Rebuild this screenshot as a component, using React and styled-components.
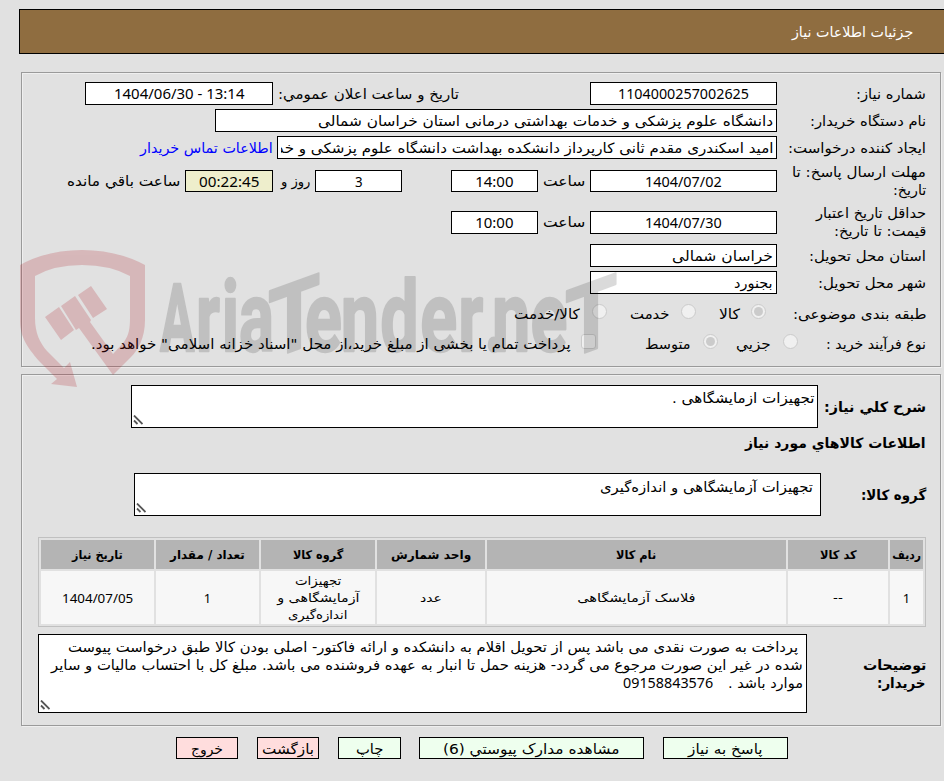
import React, { useLayoutEffect, useRef, useState } from "react";
import styled, { createGlobalStyle, css } from "styled-components";

const GlobalStyle = createGlobalStyle`
  * { box-sizing: border-box; }
  html, body { margin: 0; overflow: hidden; background: #e1e1e1; }
  body {
    font-family: "DejaVu Sans Condensed", "DejaVu Sans", sans-serif;
    font-size: 14px;
    line-height: 18px;
    color: #000;
  }
`;

/* ---------- text sized to a given measure ---------- */
const FitBox = styled.span`
  display: block;
  flex: none;
  width: ${(p) => p.$w}px;
  direction: rtl;
  text-align: right;
  ${(p) => p.$num && css`
    margin-top: -1px;
    font-family: "Noto Sans", "DejaVu Sans Condensed", sans-serif;
    font-size: 1.07em;
  `}
`;
const FitInner = styled.span`
  display: inline-block;
  white-space: pre;
  transform-origin: 100% 50%;
`;
const FitWrap = styled.span`
  display: flex;
  justify-content: flex-start;
  width: 100%;
`;

function Fit({ w, num, children }) {
  const ref = useRef(null);
  const [k, setK] = useState(1);
  useLayoutEffect(() => {
    const natural = ref.current.offsetWidth;
    if (natural) setK(w / natural);
  }, [w, children]);
  return (
    <FitBox $w={w} $num={num}>
      <FitWrap>
        <FitInner ref={ref} style={{ transform: `scaleX(${k})` }}>{children}</FitInner>
      </FitWrap>
    </FitBox>
  );
}

/* ---------- page ---------- */
const Page = styled.div`
  position: relative;
  direction: rtl;
  width: 944px;
  height: 781px;
  padding-top: 9px;
  overflow: hidden;
`;
const TitleBar = styled.header`
  display: flex;
  align-items: center;
  height: 45px;
  margin-left: 19px;
  padding-right: 31px;
  border: 1px solid #000;
  border-right: 0;
  background: #8f6d40;
  color: #fff;
`;
const Panel = styled.section`
  width: 920px;
  height: ${(p) => p.$h}px;
  margin: ${(p) => p.$mt}px 3px 0 21px;
  padding-right: 14px;
  border: 1px solid #9a9a9a;
  box-shadow: inset 1px 1px 0 #efefef, 1px 1px 0 #efefef;
`;
const Row = styled.div`
  display: flex;
  align-items: center;
  height: ${(p) => p.$h}px;
  margin-top: ${(p) => p.$mt || 0}px;
`;
const Label = styled.div`
  flex: none;
  width: ${(p) => p.$w ?? 149}px;
  ${(p) => p.$bold && css`font-weight: bold;`}
`;
const Space = styled.span`
  flex: none;
  width: ${(p) => p.$w}px;
`;
const Field = styled.div`
  display: flex;
  flex: none;
  align-items: center;
  justify-content: ${(p) => (p.$center ? "center" : "flex-start")};
  width: ${(p) => p.$w}px;
  height: ${(p) => p.$h ?? 23}px;
  padding: 0 3px;
  border: 1px solid #000;
  background: ${(p) => p.$bg || "#fff"};
`;
const Clip = styled.div`
  display: flex;
  width: 100%;
  overflow: hidden;
`;
const Link = styled.a`
  color: #0000ff;
`;
const Radio = styled.span`
  display: grid;
  place-items: center;
  flex: none;
  width: 15px;
  height: 15px;
  margin-bottom: 5px;
  border: 1px solid #cbcbcb;
  border-radius: ${(p) => (p.$square ? "3px" : "50%")};
  background: #f0f0f0;
  &::after {
    content: "";
    width: 9px;
    height: 9px;
    border-radius: 50%;
    background: ${(p) => (p.$on ? "#cbcbcb" : "transparent")};
  }
`;
const Heading = styled.h2`
  display: flex;
  margin: 6px 0 0;
  height: 18px;
  font-size: 14px;
  font-weight: bold;
`;
const Area = styled.div`
  position: relative;
  flex: none;
  width: ${(p) => p.$w}px;
  height: ${(p) => p.$h}px;
  padding: ${(p) => p.$pad || "3px 3px"};
  border: 1px solid #000;
  background: #fff;
`;
const Grip = styled.svg`
  position: absolute;
  left: 1px;
  bottom: 2px;
  width: 10px;
  height: 10px;
`;
const Indent = styled.div`
  padding-right: ${(p) => p.$w}px;
`;
const Line = styled.div`
  display: flex;
  height: 18px;
`;

/* ---------- goods table ---------- */
const Table = styled.table`
  width: 888px;
  margin-top: 21px;
  border: 1px solid #c0c0c0;
  border-collapse: separate;
  border-spacing: 2px;
  table-layout: fixed;
  font-size: 12px;
  line-height: 17px;
`;
const Th = styled.th`
  width: ${(p) => p.$w}px;
  height: 29px;
  padding: 1px 0 0;
  background: #b4b4b4;
`;
const Td = styled.td`
  height: 53px;
  padding: 2px 0 0;
  background: #f7f7f7;
`;
const Stack = styled.div`
  display: flex;
  flex-direction: column;
  align-items: center;
`;

const Actions = styled.footer`
  display: flex;
  gap: 19px;
  margin-top: 11px;
  padding-right: 156px;
`;
const Button = styled.button`
  display: flex;
  flex: none;
  align-items: center;
  justify-content: center;
  width: ${(p) => p.$w}px;
  height: 22px;
  margin: 0 ${(p) => p.$pull || 0}px 0 0;
  padding: 1px 0 0;
  border: 1px solid #000;
  background: ${(p) => (p.$warn ? "#ffdddd" : "#eeffee")};
  color: #000;
  font: inherit;
`;

/* ---------- watermark ---------- */
const Mark = styled.svg`
  position: absolute;
  left: 0;
  top: 240px;
  width: 640px;
  height: 155px;
  pointer-events: none;
  direction: ltr;
`;
const MarkText = styled.text`
  font-family: Roboto, sans-serif;
  font-weight: 700;
  font-size: ${(p) => p.$size || 99}px;
  vector-effect: non-scaling-stroke;
`;

const Watermark = () => (
  <Mark viewBox="0 240 640 155">
    <g fill="#af141e" opacity=".2">
      <path d="M20 265Q47 250 82 250T145 265V320C145 338 138 350 131 357L113 375 79 328 76 330 61 306 75 296 91 320 90 322 113 354 124 342C129 335 130 328 130 318V276Q110 265 82 265T35 276V318C35 333 40 343 47 351L64 368 70 362 77 387 51 384 57 379 40 362C25 345 20 335 20 320Z" />
      <path d="M45 317L59 307 74 330 61 340ZM78 295L91 286 107 309 93 318Z" />
    </g>
    <g fill="#000" opacity=".14" stroke="#000" strokeWidth="2" strokeLinejoin="round">
      <MarkText $size={95} transform="translate(160 351) scale(.54 1)">A</MarkText>
      <MarkText transform="translate(0 351) scale(.66 1)" x="297 336 362">ria</MarkText>
      <MarkText $size={96} transform="translate(268 360) skewY(-20) scale(.88 1)">T</MarkText>
      <MarkText transform="translate(0 351) scale(.69 1)" x="442 494 551 609 664 702 713 769">ender.ne</MarkText>
      <MarkText $size={96} transform="translate(565 360) skewY(-20) scale(.88 1)">T</MarkText>
    </g>
  </Mark>
);

const ResizeGrip = () => (
  <Grip viewBox="0 0 10 10">
    <path d="M1 0.5L9.5 9M1 5.5L4.500 9" stroke="#555" strokeWidth="1.8" fill="none" />
  </Grip>
);

const columns = [
  ["ردیف", 33, 29],
  ["کد کالا", 100, 37],
  ["نام کالا", 299, 40],
  ["واحد شمارش", 108, 80],
  ["گروه کالا", 114, 50],
  ["تعداد / مقدار", 103, 75],
  ["تاریخ نیاز", 113, 51],
];

const cells = [
  [["1", 7, true]],
  [["--", 10]],
  [["فلاسک آزمایشگاهی", 119]],
  [["عدد", 22]],
  [["تجهیزات", 46], ["آزمایشگاهی و", 83], ["اندازه‌گیری", 59]],
  [["1", 7, true]],
  [["1404/07/05", 71, true]],
];

export default function App() {
  return (
    <>
      <GlobalStyle />
      <Page>
        <TitleBar>
          <Fit w={121}>جزئیات اطلاعات نیاز</Fit>
        </TitleBar>

        <Panel $mt={18} $h={295}>
          <Row $mt={9} $h={23}>
            <Label><Fit w={70}>شماره نیاز:</Fit></Label>
            <Field $w={187} $center><Fit num w={131}>1104000257002625</Fit></Field>
            <Space $w={131} />
            <Fit w={181}>تاریخ و ساعت اعلان عمومي:</Fit>
            <Space $w={5} />
            <Field $w={188} $center><Fit num w={131}>{"\u200e1404/06/30 - 13:14"}</Fit></Field>
          </Row>
          <Row $mt={4} $h={23}>
            <Label><Fit w={116}>نام دستگاه خریدار:</Fit></Label>
            <Field $w={562}><Fit w={455}>دانشگاه علوم پزشکی و خدمات بهداشتی درمانی استان خراسان شمالی</Fit></Field>
          </Row>
          <Row $mt={4} $h={23}>
            <Label><Fit w={138}>ایجاد کننده درخواست:</Fit></Label>
            <Field $w={500}>
              <Clip><Fit w={523}>امید اسکندری مقدم ثانی کارپرداز دانشکده بهداشت دانشگاه علوم پزشکی و خدمات</Fit></Clip>
            </Field>
            <Space $w={4} />
            <Link><Fit w={133}>اطلاعات تماس خریدار</Fit></Link>
          </Row>
          <Row $mt={5} $h={34}>
            <Label>
              <Fit w={134}>مهلت ارسال پاسخ: تا</Fit>
              <Fit w={33}>تاریخ:</Fit>
            </Label>
            <Field $w={187} $h={22} $center><Fit num w={77}>1404/07/02</Fit></Field>
            <Space $w={5} />
            <Fit w={42}>ساعت</Fit>
            <Space $w={5} />
            <Field $w={87} $h={22} $center><Fit num w={38}>14:00</Fit></Field>
            <Space $w={49} />
            <Field $w={87} $h={22} $center><Fit num w={8}>3</Fit></Field>
            <Space $w={5} />
            <Fit w={29}>روز و</Fit>
            <Space $w={8} />
            <Field $w={88} $h={22} $center $bg="#eeeecc"><Fit num w={60}>00:22:45</Fit></Field>
            <Space $w={5} />
            <Fit w={113}>ساعت باقي مانده</Fit>
          </Row>
          <Row $mt={6} $h={36}>
            <Label>
              <Fit w={110}>حداقل تاریخ اعتبار</Fit>
              <Fit w={92}>قیمت: تا تاریخ:</Fit>
            </Label>
            <Field $w={187} $center><Fit num w={77}>1404/07/30</Fit></Field>
            <Space $w={5} />
            <Fit w={42}>ساعت</Fit>
            <Space $w={5} />
            <Field $w={87} $center><Fit num w={38}>10:00</Fit></Field>
          </Row>
          <Row $mt={4} $h={23}>
            <Label><Fit w={117}>استان محل تحویل:</Fit></Label>
            <Field $w={187}><Fit w={101}>خراسان شمالی</Fit></Field>
          </Row>
          <Row $mt={4} $h={23}>
            <Label><Fit w={108}>شهر محل تحویل:</Fit></Label>
            <Field $w={187}><Fit w={39}>بجنورد</Fit></Field>
          </Row>
          <Row $mt={10} $h={20}>
            <Label $w={160}><Fit w={133}>طبقه بندی موضوعی:</Fit></Label>
            <Radio $on />
            <Space $w={11} />
            <Fit w={21}>کالا</Fit>
            <Space $w={23} />
            <Radio />
            <Space $w={11} />
            <Fit w={40}>خدمت</Fit>
            <Space $w={23} />
            <Radio />
            <Space $w={12} />
            <Fit w={66}>کالا/خدمت</Fit>
          </Row>
          <Row $mt={10} $h={20}>
            <Label $w={128}><Fit w={100}>نوع فرآیند خرید :</Fit></Label>
            <Radio />
            <Space $w={12} />
            <Fit w={35}>جزيي</Fit>
            <Space $w={18} />
            <Radio $on />
            <Space $w={12} />
            <Fit w={46}>متوسط</Fit>
            <Space $w={49} />
            <Radio $square />
            <Space $w={10} />
            <Fit w={480}>پرداخت تمام یا بخشی از مبلغ خرید،از محل "اسناد خزانه اسلامی" خواهد بود.</Fit>
          </Row>
        </Panel>

        <Panel $mt={7} $h={352}>
          <Row $mt={10} $h={43}>
            <Label $w={108} $bold><Fit w={102}>شرح كلي نیاز:</Fit></Label>
            <Area $w={687} $h={43}>
              <Fit w={142}>تجهیزات ازمایشگاهی .</Fit>
              <ResizeGrip />
            </Area>
          </Row>
          <Heading><Fit w={181}>اطلاعات کالاهاي مورد نیاز</Fit></Heading>
          <Row $mt={21} $h={43}>
            <Label $w={105} $bold><Fit w={65}>گروه کالا:</Fit></Label>
            <Area $w={687} $h={43} $pad="4px 7px">
              <Fit w={213}>تجهیزات آزمایشگاهی و اندازه‌گیری</Fit>
              <ResizeGrip />
            </Area>
          </Row>
          <Table>
            <thead>
              <tr>
                {columns.map(([name, width, textWidth]) => (
                  <Th key={name} $w={width}><Stack><Fit w={textWidth}>{name}</Fit></Stack></Th>
                ))}
              </tr>
            </thead>
            <tbody>
              <tr>
                {cells.map((lines, i) => (
                  <Td key={i}>
                    <Stack>
                      {lines.map(([text, width, num]) => <Fit key={text} w={width} num={num}>{text}</Fit>)}
                    </Stack>
                  </Td>
                ))}
              </tr>
            </tbody>
          </Table>
          <Row $mt={7} $h={79}>
            <Label $w={119} $bold>
              <Fit w={63}>توضیحات</Fit>
              <Fit w={49}>خریدار:</Fit>
            </Label>
            <Area $w={769} $h={79}>
              <Indent $w={5}>
                <Fit w={730}>پرداخت به صورت نقدی می باشد پس از تحویل اقلام به دانشکده و ارائه فاکتور- اصلی بودن کالا طبق درخواست پیوست</Fit>
              </Indent>
              <Fit w={752}>شده در غیر این صورت مرجوع می گردد- هزینه حمل تا انبار به عهده فروشنده می باشد. مبلغ کل با احتساب مالیات و سایر</Fit>
              <Line>
                <Fit w={75}>موارد باشد .</Fit>
                <Space $w={15} />
                <Fit num w={90}>09158843576</Fit>
              </Line>
              <ResizeGrip />
            </Area>
          </Row>
        </Panel>

        <Actions>
          <Button $w={125}><Fit w={75}>پاسخ به نیاز</Fit></Button>
          <Button $w={225}><Fit w={176}>مشاهده مدارک پیوستي (6)</Fit></Button>
          <Button $w={63} $pull={-1}><Fit w={27}>چاپ</Fit></Button>
          <Button $w={62} $warn><Fit w={52}>بازگشت</Fit></Button>
          <Button $w={62} $warn><Fit w={32}>خروج</Fit></Button>
        </Actions>
        <Watermark />
      </Page>
    </>
  );
}
